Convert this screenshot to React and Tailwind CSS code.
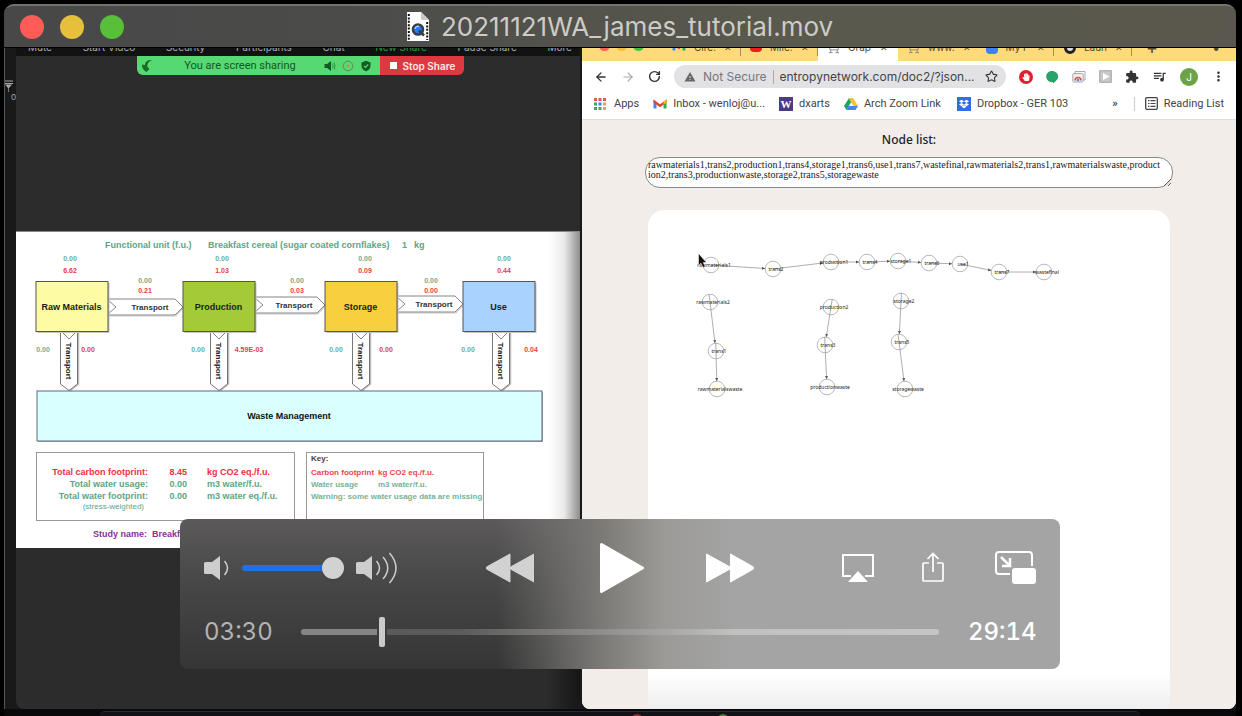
import React from "react";
import { ArrowLeft, ArrowRight, RotateCw, Star } from "lucide-react";
import { MdWarning, MdExtension, MdQueueMusic, MdMoreVert } from "react-icons/md";
import { FaDropbox, FaHandPaper } from "react-icons/fa";

/* ---------- Title bar ---------- */

function MovieFileIcon() {
  return (
    <svg viewBox="0 0 22 29" className="h-[29px] w-[22px] shrink-0" aria-hidden="true">
      <path d="M0 0H14L22 8V29H0Z" fill="#fdfdfd" />
      <path d="M14 0L22 8H15.5Q14 8 14 6.5Z" fill="#c9c9c9" />
      <path d="M1.8 2V28" stroke="#111" strokeWidth="2" strokeDasharray="2 1.4" />
      <path d="M20.2 10V28" stroke="#111" strokeWidth="2" strokeDasharray="2 1.4" />
      <circle cx="11" cy="17.5" r="5" fill="#1f7cff" stroke="#3a3d44" strokeWidth="2.6" />
      <path d="M12 18.5L17 23.5" stroke="#3a3d44" strokeWidth="2.6" />
      <path d="M8 17a3 3 0 0 1 4-2.5" stroke="#a9dcff" strokeWidth="1.4" fill="none" />
    </svg>
  );
}

function TitleBar() {
  return (
    <header className="flex h-[44px] shrink-0 items-center rounded-t-[10px] border-t-2 border-b border-t-[#73736f] border-b-black bg-[linear-gradient(to_right,#484848_0%,#4b4b4a_28%,#5a594d_62%,#5a584e_100%)] px-4">
      <div className="flex flex-1 gap-4">
        <button aria-label="Close" className="size-6 rounded-full bg-[#ff5c57]" />
        <button aria-label="Minimize" className="size-6 rounded-full bg-[#e6bf3d]" />
        <button aria-label="Zoom" className="size-6 rounded-full bg-[#58c038]" />
      </div>
      <h1 className="flex items-center gap-3 font-['Inter',sans-serif] text-[26px] leading-8 font-normal text-[#ccccc6]">
        <MovieFileIcon />
        20211121WA_james_tutorial.mov
      </h1>
      <div className="flex-1" />
    </header>
  );
}

/* ---------- Screen sharing side ---------- */

function MeetingMenu() {
  return (
    <div className="flex h-2 items-end justify-between overflow-hidden bg-[#121212] pr-2 pb-[3px] pl-3 font-['Inter',sans-serif] text-[10px] leading-3 text-[#aaa]">
      <span>Mute</span>
      <span>Start Video</span>
      <span>Security</span>
      <span>Participants</span>
      <span>Chat</span>
      <span className="text-[#1ea13c]">New Share</span>
      <span>Pause Share</span>
      <span>More</span>
    </div>
  );
}

function ShareBar() {
  return (
    <div className="flex h-[19px] justify-center pl-1 text-[11px] leading-[19px]">
      <div className="flex w-[243px] items-center rounded-bl-md bg-[#56d873] pr-2 pl-1 font-['Roboto',sans-serif] text-[#17542a]">
        <svg viewBox="0 0 12 12" className="size-3" aria-hidden="true">
          <path d="M11 0C6 0 4 2 4 5L1 4.5C1 8 2.5 10.5 5.5 12L8.5 9L6.5 7C6 4 7 2 11 0Z" fill="#1b6a2a" />
        </svg>
        <span className="flex-1 pl-1 text-center">You are screen sharing</span>
        <span className="flex items-center gap-1.5">
          <svg viewBox="0 0 12 12" className="size-3" aria-hidden="true">
            <path d="M0.5 4H3L7 1V11L3 8H0.5Z" fill="#145a22" />
            <path d="M8.5 3.5q1.5 2.5 0 5M10 2.5q2.3 3.5 0 7" fill="none" stroke="#2f9a48" />
          </svg>
          <svg viewBox="0 0 12 12" className="size-3" aria-hidden="true">
            <circle cx="6" cy="6" r="4.8" fill="none" stroke="#5f8f55" />
            <circle cx="6" cy="6" r="1.5" fill="#c98f5a" />
          </svg>
          <svg viewBox="0 0 12 12" className="size-3" aria-hidden="true">
            <path d="M6 0.8L10.5 2.5V6C10.5 8.5 8.5 10.5 6 11.3C3.5 10.5 1.5 8.5 1.5 6V2.5Z" fill="#145a22" />
            <path d="M4 6L5.5 7.5L8.2 4.5" fill="none" stroke="#56d873" strokeWidth="1.2" />
          </svg>
        </span>
      </div>
      <button className="flex w-[84px] items-center gap-1.5 rounded-br-md bg-[#dc3a40] pl-2.5 font-['Inter',sans-serif] text-[10px] leading-4 font-semibold whitespace-nowrap text-[#ffe9e9]">
        <span className="size-[7px] shrink-0 bg-white" />
        Stop Share
      </button>
    </div>
  );
}

const stages = [
  { x: 36, label: "Raw Materials", fill: "#fdfba3", water: "0.00", carbon: "6.62", top: 70, pipe: 69, wl: "0.00", wx: 43, wr: "0.00", rx: 88 },
  { x: 183, label: "Production", fill: "#a4ca37", water: "0.00", carbon: "1.03", top: 222, pipe: 219, wl: "0.00", wx: 198, wr: "4.59E-03", rx: 249 },
  { x: 325, label: "Storage", fill: "#f8cf3e", water: "0.00", carbon: "0.09", top: 365, pipe: 361, wl: "0.00", wx: 336, wr: "0.00", rx: 386 },
  { x: 463, label: "Use", fill: "#a9d2ff", water: "0.00", carbon: "0.44", top: 504, pipe: 501, wl: "0.00", wx: 468, wr: "0.04", rx: 531 },
];
const links = [
  { x1: 108, x2: 183, y: 307, carbon: "0.21", tx: 145, lx: 150 },
  { x1: 255, x2: 325, y: 305, carbon: "0.03", tx: 297, lx: 294 },
  { x1: 397, x2: 463, y: 304, carbon: "0.00", tx: 431, lx: 434 },
];

function FlowDiagram() {
  return (
    <svg viewBox="16 232 564 212" className="block w-full font-['Liberation_Sans',sans-serif] font-bold" role="img" aria-label="Carbon and water footprint flow">
      <g fontSize="9" fill="#5ba686">
        <text x="105" y="248">Functional unit (f.u.)</text>
        <text x="208" y="248">Breakfast cereal (sugar coated cornflakes)</text>
        <text x="402" y="248">1</text>
        <text x="414" y="248">kg</text>
      </g>
      {links.map((l) => (
        <g key={l.x1}>
          <path d={`M${l.x1 + 1} ${l.y + 9}H${l.x2 - 7}L${l.x2} ${l.y + 1}`} fill="none" stroke="#ccc" strokeWidth="1.2" />
          <path d={`M${l.x1} ${l.y - 8}H${l.x2 - 8}L${l.x2} ${l.y}L${l.x2 - 8} ${l.y + 8}H${l.x1}Z`} fill="#fff" stroke="#777" strokeWidth="0.9" />
          <path d={`M${l.x1} ${l.y - 7}L${l.x1 + 8} ${l.y}L${l.x1} ${l.y + 7}`} fill="none" stroke="#777" strokeWidth="0.9" />
          <g textAnchor="middle">
            <text x={l.lx} y={l.y + 3} fontSize="8" fill="#333">Transport</text>
            <text x={l.tx} y="283" fontSize="7" fill="#6fae95">0.00</text>
            <text x={l.tx} y="293" fontSize="7" fill="#ea3c4c">{l.carbon}</text>
          </g>
        </g>
      ))}
      {stages.map((s) => (
        <g key={s.x} textAnchor="middle">
          <path d={`M${s.pipe + 9.5} 333V384L${s.pipe + 1} 391`} fill="none" stroke="#bbb" strokeWidth="1.5" />
          <path d={`M${s.pipe - 8.5} 332V384L${s.pipe} 390.5L${s.pipe + 8.5} 384V332Z`} fill="#fff" stroke="#666" strokeWidth="0.9" />
          <path d={`M${s.pipe - 7} 332L${s.pipe} 339L${s.pipe + 7} 332`} fill="none" stroke="#777" strokeWidth="0.9" />
          <text transform={`translate(${s.pipe - 3} 361) rotate(90)`} fontSize="8" fill="#222">Transport</text>
          <rect x={s.x + 1.5} y="283" width="72" height="50" fill="#c4c4c4" />
          <rect x={s.x} y="281.5" width="72" height="50" fill={s.fill} stroke="#555" />
          <text x={s.x + 35.5} y="310" fontSize="9" fill="#1c1c1c">{s.label}</text>
          <text x={s.top} y="261" fontSize="7" fill="#6fae95">{s.water}</text>
          <text x={s.top} y="273" fontSize="7" fill="#ea3c4c">{s.carbon}</text>
          <text x={s.wx} y="352" fontSize="7" fill="#6fae95">{s.wl}</text>
          <text x={s.rx} y="352" fontSize="7" fill="#ea3c4c">{s.wr}</text>
        </g>
      ))}
      <rect x="38" y="392" width="505" height="50" fill="#a9b8ba" />
      <rect x="37" y="391" width="505" height="50" fill="#d9ffff" stroke="#557" strokeWidth="0.9" />
      <text x="289" y="419" fontSize="9" fill="#111" textAnchor="middle">Waste Management</text>
    </svg>
  );
}

function FootprintReport() {
  return (
    <section className="relative h-[317px] shrink-0 overflow-hidden border-t border-[#888] bg-white font-['Liberation_Sans',sans-serif]">
      <FlowDiagram />
      <div className="flex gap-[11px] pt-2 pl-5">
        <div className="h-[69px] w-[259px] border border-[#999] pt-[13px] pl-[9px]">
          <table className="text-[9px] leading-3 font-bold text-[#5ba686]">
            <tbody>
              <tr className="text-[#ef3038]">
                <th className="w-[102px] p-0 text-right">Total carbon footprint:</th>
                <td className="w-[39px] p-0 text-right">8.45</td>
                <td className="p-0 pl-5">kg CO2 eq./f.u.</td>
              </tr>
              <tr>
                <th className="p-0 text-right">Total water usage:</th>
                <td className="p-0 text-right">0.00</td>
                <td className="p-0 pl-5">m3 water/f.u.</td>
              </tr>
              <tr>
                <th className="p-0 text-right">Total water footprint:</th>
                <td className="p-0 text-right">0.00</td>
                <td className="p-0 pl-5">m3 water eq./f.u.</td>
              </tr>
              <tr className="text-[8px] leading-[10px]">
                <th className="p-0 pr-1 text-right font-normal">(stress-weighted)</th>
                <td />
                <td />
              </tr>
            </tbody>
          </table>
        </div>
        <div className="h-[69px] w-[178px] border border-[#999] pl-1 text-[8px] leading-3 font-bold text-[#75b399]">
          <p className="text-[#444]">Key:</p>
          <div className="grid grid-cols-[67px_1fr] pt-0.5">
            <span className="text-[#ee4450]">Carbon footprint</span>
            <span className="text-[#ee4450]">kg CO2 eq./f.u.</span>
            <span>Water usage</span>
            <span>m3 water/f.u.</span>
          </div>
          <p className="whitespace-nowrap">Warning: some water usage data are missing</p>
        </div>
      </div>
      <p className="pt-[7px] pl-[77px] text-[9px] leading-3 font-bold whitespace-pre text-[#8a2f9b]">Study name:  Breakfast cereal</p>
      <div className="absolute inset-y-0 right-0 w-8 bg-linear-to-r from-transparent via-black/8 to-black/45" />
    </section>
  );
}

function SharedScreen() {
  return (
    <div className="flex min-w-0 flex-col overflow-hidden rounded-b-lg bg-[#2c2c2c]">
      <div className="h-[183px] shrink-0">
        <MeetingMenu />
        <ShareBar />
      </div>
      <FootprintReport />
      <div className="flex-1 bg-[linear-gradient(to_right,transparent_94%,#161616)]" />
    </div>
  );
}

/* ---------- Browser side ---------- */

function Gmail() {
  return (
    <svg viewBox="0 0 14 11" className="h-[11px] w-3.5 shrink-0" aria-hidden="true">
      <path d="M0.5 1.5V10.5H3.5V4Z" fill="#4285f4" />
      <path d="M13.5 1.5V10.5H10.5V4Z" fill="#34a853" />
      <path d="M0.5 1.5L7 6.3L13.5 1.5V4.5L7 9.3L0.5 4.5Z" fill="#ea4335" />
      <path d="M10.5 3.7L13.5 1.5V4.5L10.5 6.7Z" fill="#fbbc04" />
    </svg>
  );
}

function Tab({ icon, title, active }) {
  return (
    <div className={active ? "flex h-[21px] w-20 shrink-0 items-start gap-2 bg-white px-2.5" : "flex h-[21px] w-[78px] shrink-0 items-start gap-2 pl-2.5"}>
      {icon}
      <span className="flex-1 whitespace-nowrap">{title}</span>
      <span className="text-[9px]">✕</span>
      {!active && <span className="h-4 w-px bg-[#a58f55]" />}
    </div>
  );
}

const sketchIcon = (
  <svg viewBox="0 0 13 12" className="mt-0.5 h-3 w-3 shrink-0" aria-hidden="true">
    <path d="M2 2H11V8H2ZM1 11H5M8 11H12M3 8V11M10 8V11" fill="none" stroke="#888" />
  </svg>
);

function TabStrip() {
  return (
    <div className="flex h-[13px] shrink-0 items-end overflow-hidden bg-[#fddb7b] font-['Inter',sans-serif] text-[10px] leading-[15px] text-[#55492c]">
      <div className="flex h-[21px] w-20 shrink-0 gap-1.5 pl-[17px]">
        <span className="size-[11px] rounded-full bg-[#ff5f57]" />
        <span className="size-[11px] rounded-full bg-[#f5bd3d]" />
        <span className="size-[11px] rounded-full bg-[#40c33f]" />
      </div>
      <Tab icon={<Gmail />} title="Circ:" />
      <Tab icon={<span className="h-3 w-3 rounded-sm bg-[#f01c1c]" />} title="Mile:" />
      <Tab active icon={sketchIcon} title="Grap" />
      <Tab icon={sketchIcon} title="www." />
      <Tab icon={<span className="mt-0.5 h-3 w-3 rounded-sm bg-[#3b82f0]" />} title="My F" />
      <Tab icon={<span className="mt-0.5 h-3 w-3 rounded-full border-3 border-[#222] bg-[#ddd]" />} title="Laun" />
      <span className="h-[21px] w-10 text-center text-lg leading-[15px]">+</span>
      <span className="h-[21px] flex-1 pr-4 text-right text-sm leading-[15px]">•</span>
    </div>
  );
}

function AddressBar() {
  return (
    <div className="flex h-[31px] shrink-0 items-center gap-[13px] pr-2.5 pl-3 text-[#333]">
      <button aria-label="Back"><ArrowLeft size={14} strokeWidth={2.2} /></button>
      <button aria-label="Forward" className="text-[#aaa]"><ArrowRight size={14} strokeWidth={2} /></button>
      <button aria-label="Reload"><RotateCw size={13} strokeWidth={2.6} /></button>
      <div className="flex h-[23px] min-w-0 flex-1 items-center rounded-full bg-[#e2e1e4] pr-2 pl-2.5 text-[12px] leading-4">
        <MdWarning size={12} className="shrink-0 text-[#666]" />
        <span className="ml-[7px] whitespace-nowrap text-[#77777b]">Not Secure</span>
        <span className="mx-1.5 h-3.5 w-px shrink-0 bg-[#aaa]" />
        <input aria-label="Address" readOnly value="entropynetwork.com/doc2/?json..." className="min-w-0 flex-1 bg-transparent text-[#444] outline-none" />
        <button aria-label="Bookmark this page" className="shrink-0"><Star size={13} /></button>
      </div>
      <button aria-label="Ad blocker" className="flex size-3.5 items-center justify-center rounded-full bg-[#e0202c] text-white"><FaHandPaper size={8} /></button>
      <button aria-label="Chat">
        <svg viewBox="0 0 13 14" className="h-3.5 w-[13px]" aria-hidden="true">
          <path d="M6.5 1A5.7 5.7 0 0 1 12.2 6.6C12.2 9.5 10 11 7 13.5V12A5.6 5.6 0 1 1 6.5 1Z" fill="#27a36a" />
        </svg>
      </button>
      <button aria-label="Captures">
        <svg viewBox="0 0 14 13" className="h-[13px] w-3.5" aria-hidden="true">
          <path d="M3 3V1.5H13V10H11" fill="none" stroke="#aaa" />
          <rect x="0.8" y="3.5" width="10.4" height="8.5" rx="1" fill="#eee" stroke="#aaa" />
          <path d="M3 10.5a3 3 0 0 1 6 0" fill="none" stroke="#e2504a" strokeWidth="1.5" />
          <circle cx="6" cy="10" r="1.3" fill="#4a86e8" />
        </svg>
      </button>
      <button aria-label="Player">
        <svg viewBox="0 0 13 13" className="size-[13px]" aria-hidden="true">
          <rect width="13" height="13" rx="1" fill="#b4b4b4" />
          <rect x="1.5" y="1.5" width="10" height="10" fill="#c9c9c9" />
          <path d="M4 3L10.5 6.5L4 10Z" fill="#fff" />
        </svg>
      </button>
      <button aria-label="Extensions"><MdExtension size={14} /></button>
      <button aria-label="Media"><MdQueueMusic size={15} /></button>
      <button aria-label="Profile" className="size-[18px] shrink-0 rounded-full bg-[#6ca345] text-[10px] leading-none text-white">J</button>
      <button aria-label="Menu"><MdMoreVert size={15} /></button>
    </div>
  );
}

const appColors = ["#e05a4e", "#e05a4e", "#e05a4e", "#3fa35f", "#3f7fe0", "#e3a63a", "#3fa35f", "#3fa35f", "#e3a63a"];

function BookmarkBar() {
  return (
    <nav className="flex h-7 shrink-0 items-center border-b border-[#e3dcdc] px-3 pb-1 font-['Roboto',sans-serif] text-[11px] leading-4 whitespace-nowrap text-[#444]">
      <a href="#apps" className="flex items-center gap-2">
        <svg viewBox="0 0 12 12" className="size-3" aria-hidden="true">
          {appColors.map((c, i) => (
            <rect key={i} x={(i % 3) * 4.5} y={Math.floor(i / 3) * 4.5} width="3" height="3" fill={c} />
          ))}
        </svg>
        Apps
      </a>
      <a href="#inbox" className="ml-3.5 flex items-center gap-1.5"><Gmail />Inbox - wenloj@u...</a>
      <a href="#dxarts" className="ml-3.5 flex items-center gap-1.5">
        <span className="flex size-3.5 items-center justify-center bg-[#4b3b86] font-['Liberation_Serif',serif] text-[11px] font-bold text-white">W</span>
        dxarts
      </a>
      <a href="#arch" className="ml-3.5 flex items-center gap-1.5">
        <svg viewBox="0 0 14 12" className="h-3 w-3.5" aria-hidden="true">
          <path d="M4.7 0.5H9.3L2.5 12L0 8Z" fill="#1ea362" />
          <path d="M4.7 0.5H9.3L14 8H9.5Z" fill="#fbc12e" />
          <path d="M4.5 8H14L11.5 12H2.3Z" fill="#4285f4" />
        </svg>
        Arch Zoom Link
      </a>
      <a href="#dropbox" className="ml-4 flex items-center gap-1.5">
        <span className="flex size-3.5 items-center justify-center bg-[#2f6fe4] text-white"><FaDropbox size={10} /></span>
        Dropbox - GER 103
      </a>
      <button aria-label="More bookmarks" className="ml-auto font-bold">»</button>
      <span className="mr-2.5 ml-4 h-3.5 w-px bg-[#ccc]" />
      <button className="flex items-center gap-1.5">
        <svg viewBox="0 0 13 13" className="size-[13px]" aria-hidden="true">
          <rect x="0.7" y="0.7" width="11.6" height="11.6" rx="1" fill="none" stroke="#444" strokeWidth="1.3" />
          <path d="M3 3.7H4.5M5.5 3.7H10.5M3 6.5H4.5M5.5 6.5H10.5M3 9.3H4.5M5.5 9.3H10.5" stroke="#444" strokeWidth="1.2" />
        </svg>
        Reading List
      </button>
    </nav>
  );
}

const nodes = {
  rawmaterials1: [711, 265], trans2: [773, 269], production1: [831, 262], trans4: [867, 262],
  storage1: [898, 261], trans6: [929, 263], use1: [960, 264], trans7: [999, 272], wastefinal: [1044, 272],
  rawmaterials2: [710, 302], trans1: [716, 351], rawmaterialswaste: [717, 389],
  production2: [831, 307], trans3: [825, 345], productionwaste: [827, 387],
  storage2: [901, 301], trans5: [899, 342], storagewaste: [905, 389],
};
const chains = [
  ["rawmaterials1", "trans2", "production1", "trans4", "storage1", "trans6", "use1", "trans7", "wastefinal"],
  ["rawmaterials2", "trans1", "rawmaterialswaste"],
  ["production2", "trans3", "productionwaste"],
  ["storage2", "trans5", "storagewaste"],
];
const edges = chains.flatMap((c) => c.slice(1).map((to, i) => [nodes[c[i]], nodes[to]]));

function NodeGraph() {
  return (
    <svg viewBox="648 210 522 240" className="block w-full" role="img" aria-label="Node graph">
      {Object.entries(nodes).map(([name, [x, y]]) => (
        <circle key={name} cx={x} cy={y} r="7.8" fill="#fff" stroke="#b0b0b0" strokeWidth="0.9" />
      ))}
      {edges.map(([a, b], i) => {
        const d = Math.hypot(b[0] - a[0], b[1] - a[1]);
        const ux = (b[0] - a[0]) / d;
        const uy = (b[1] - a[1]) / d;
        const ex = b[0] - ux * 8;
        const ey = b[1] - uy * 8;
        const back = uy > 0.9 ? 8 : 0;
        return (
          <g key={i}>
            <path d={`M${a[0] - ux * back} ${a[1] - uy * back}L${ex} ${ey}`} stroke="#999" strokeWidth="0.8" />
            <path d={`M${ex} ${ey}L${ex - ux * 3 - uy * 1.5} ${ey - uy * 3 + ux * 1.5}L${ex - ux * 3 + uy * 1.5} ${ey - uy * 3 - ux * 1.5}Z`} fill="#555" />
          </g>
        );
      })}
      <g fontSize="5" fill="#222" textAnchor="middle" className="font-['Noto_Sans',sans-serif]">
        {Object.entries(nodes).map(([name, [x, y]]) => (
          <text key={name} x={x + 3} y={y + 2}>{name}</text>
        ))}
      </g>
      <path d="M698.5 253.5V265.5L701 263.3L703 267.5L705.2 266.5L703.2 262.5H706.5Z" fill="#111" stroke="#fff" strokeWidth="0.5" />
    </svg>
  );
}

const nodeList =
  "rawmaterials1,trans2,production1,trans4,storage1,trans6,use1,trans7,wastefinal,rawmaterials2,trans1,rawmaterialswaste,product\nion2,trans3,productionwaste,storage2,trans5,storagewaste";

function Browser() {
  return (
    <div className="flex min-w-0 flex-col overflow-hidden rounded-b-lg bg-white font-['Inter',sans-serif]">
      <TabStrip />
      <AddressBar />
      <BookmarkBar />
      <div className="flex min-h-0 flex-1 flex-col bg-[#f2ede9] px-[63px] pt-3">
        <label htmlFor="node-list" className="text-center font-['Noto_Sans',sans-serif] text-[12px] leading-4 font-medium text-[#222]">Node list:</label>
        <textarea
          id="node-list"
          defaultValue={nodeList}
          className="mt-[9px] h-[31px] shrink-0 overflow-hidden rounded-[15px] border border-[#888] bg-white px-0.5 pt-0.5 font-['Liberation_Serif',serif] text-[10px] leading-[10px] text-[#222]"
        />
        <div className="mx-[3px] mt-[22px] flex-1 overflow-hidden rounded-t-2xl bg-[linear-gradient(to_bottom,#fff_93%,#eee)]">
          <NodeGraph />
        </div>
      </div>
    </div>
  );
}

/* ---------- Player controls ---------- */

function Player() {
  return (
    <div className="absolute bottom-[47px] left-1/2 flex h-[150px] w-[880px] max-w-full -translate-x-1/2 flex-col rounded-lg bg-[linear-gradient(to_right,transparent_36%,#7b7a77_48%,#9b9a97_55%,#a4a4a4_63%),linear-gradient(to_bottom,#5c5a5b,#484848_40%,#353535)] px-6 text-[#cdcdcd]">
      <div className="grid h-[98px] grid-cols-[1fr_auto_1fr] items-center">
        <div className="flex items-center gap-3">
          <svg viewBox="0 0 26 26" className="size-[26px]" role="img" aria-label="Quiet">
            <path d="M0 8.5Q0 7 1.5 7H8L16 1V25L8 19H1.5Q0 19 0 17.5Z" fill="currentColor" />
            <path d="M20.5 6Q26.5 13 20.5 20" fill="none" stroke="currentColor" strokeWidth="1.5" />
          </svg>
          <input
            type="range"
            aria-label="Volume"
            defaultValue="100"
            className="h-[22px] w-[102px] appearance-none bg-transparent [&::-webkit-slider-runnable-track]:h-1.5 [&::-webkit-slider-runnable-track]:rounded-full [&::-webkit-slider-runnable-track]:bg-[#216fe6] [&::-webkit-slider-thumb]:-mt-2 [&::-webkit-slider-thumb]:size-[22px] [&::-webkit-slider-thumb]:appearance-none [&::-webkit-slider-thumb]:rounded-full [&::-webkit-slider-thumb]:bg-[#d2d2d2] [&::-webkit-slider-thumb]:shadow"
          />
          <svg viewBox="0 0 42 32" className="h-8 w-[42px]" role="img" aria-label="Loud">
            <path d="M0 11.5Q0 10 1.5 10H8L16 4V28L8 22H1.5Q0 22 0 20.5Z" fill="currentColor" />
            <path d="M20.5 9Q26.5 16 20.5 23M27 5Q36.5 16 27 27M33.5 1Q46.5 16 33.5 31" fill="none" stroke="currentColor" strokeWidth="1.5" />
          </svg>
        </div>
        <div className="flex items-center">
          <button aria-label="Rewind">
            <svg viewBox="0 0 48 30" className="h-[30px] w-12"><path d="M24 1V29L0.5 16V14ZM48 1V29L24.5 16V14Z" fill="#d2d2d2" stroke="#d2d2d2" strokeLinejoin="round" /></svg>
          </button>
          <button aria-label="Play" className="mr-[62px] ml-[66px]">
            <svg viewBox="0 0 44 50" className="h-[50px] w-11"><path d="M1.5 1.5L42.5 25L1.5 48.5Z" fill="#fff" stroke="#fff" strokeWidth="3" strokeLinejoin="round" /></svg>
          </button>
          <button aria-label="Fast forward">
            <svg viewBox="0 0 48 30" className="h-[30px] w-12"><path d="M0.5 1V29L24 16V14ZM24.5 1V29L47.5 16V14Z" fill="#fff" stroke="#fff" strokeLinejoin="round" /></svg>
          </button>
        </div>
        <div className="flex items-center justify-end text-white">
          <button aria-label="AirPlay">
            <svg viewBox="0 0 32 28" className="h-7 w-8"><path d="M9 22H1V1H31V22H23" fill="none" stroke="#fff" strokeWidth="2" /><path d="M16 17L26 28H6Z" fill="#fff" /></svg>
          </button>
          <button aria-label="Share" className="mr-[51px] ml-12">
            <svg viewBox="0 0 22 32" className="h-8 w-[22px]"><path d="M7 11H2Q1 11 1 12V28Q1 29 2 29H20Q21 29 21 28V12Q21 11 20 11H15M11 20V1.500M5.500 7L11 1.500L16.500 7" fill="none" stroke="#fff" strokeWidth="1.700" /></svg>
          </button>
          <button aria-label="Picture in picture">
            <svg viewBox="0 0 41 34" className="h-[34px] w-[41px]">
              <path d="M15 23H4Q1 23 1 20V4Q1 1 4 1H34Q37 1 37 4V15" fill="none" stroke="#fff" strokeWidth="2" />
              <path d="M6 6L15 15M15 7V15H7" fill="none" stroke="#fff" strokeWidth="2.5" />
              <rect x="17" y="17" width="24" height="16" rx="3" fill="#fff" />
            </svg>
          </button>
        </div>
      </div>
      <div className="flex h-[30px] items-center font-['Inter',sans-serif] text-[24px] leading-[30px] tabular-nums">
        <span className="w-[68px] text-[#b3b3b3]">03:30</span>
        <input
          type="range"
          aria-label="Position"
          min="0"
          max="1754"
          defaultValue="216"
          className="mx-[29px] h-[30px] min-w-0 flex-1 appearance-none bg-transparent [&::-webkit-slider-runnable-track]:h-1.5 [&::-webkit-slider-runnable-track]:rounded-full [&::-webkit-slider-runnable-track]:bg-[linear-gradient(to_right,#848484_76px,transparent_76px,transparent_86px,#5a5a5a_86px,#5c5b5a_25%,#8c8b89_46%,#c1c1c0_68%,#c4c4c4)] [&::-webkit-slider-thumb]:-mt-3 [&::-webkit-slider-thumb]:h-[30px] [&::-webkit-slider-thumb]:w-1.5 [&::-webkit-slider-thumb]:appearance-none [&::-webkit-slider-thumb]:rounded-xs [&::-webkit-slider-thumb]:bg-[#cacaca]"
        />
        <span className="w-[68px] font-medium text-white">29:14</span>
      </div>
    </div>
  );
}

export default function App() {
  return (
    <div className="flex h-screen flex-col overflow-hidden bg-black pt-1 pr-1.5 pl-1">
      <TitleBar />
      <main className="relative flex min-h-0 flex-1 flex-col">
        <div className="flex min-h-0 flex-1">
          <div className="w-3 shrink-0 border-l border-[#555] bg-[#191919] pt-8">
            <svg viewBox="0 0 11 12" className="h-3 w-[11px]" aria-hidden="true">
              <path d="M0 1H8M0 3.5H8" stroke="#aaa" strokeWidth="1.2" />
              <path d="M0 4.5H7L3.5 8.5Z" fill="#aaa" />
              <path d="M3.5 8V12" stroke="#777" />
            </svg>
            <p className="text-right font-['Inter',sans-serif] text-[8px] leading-[10px] text-[#aaa]">0</p>
          </div>
          <div className="grid min-w-0 flex-1 grid-cols-[564fr_654fr] gap-0.5 bg-[#191919]">
            <SharedScreen />
            <Browser />
          </div>
        </div>
        <div className="h-[7px] shrink-0 bg-[#09090b] px-24 pt-0.5">
          <div className="flex h-full justify-center gap-[74px] overflow-hidden rounded-t-lg border-t border-[#2b2b33] bg-[#111118] pt-0.5 pl-30">
            <span className="h-3 w-3 rounded-full bg-[#a02a2e]" />
            <span className="h-3 w-3 rounded-full bg-[#3f7d38]" />
          </div>
        </div>
        <Player />
      </main>
    </div>
  );
}
